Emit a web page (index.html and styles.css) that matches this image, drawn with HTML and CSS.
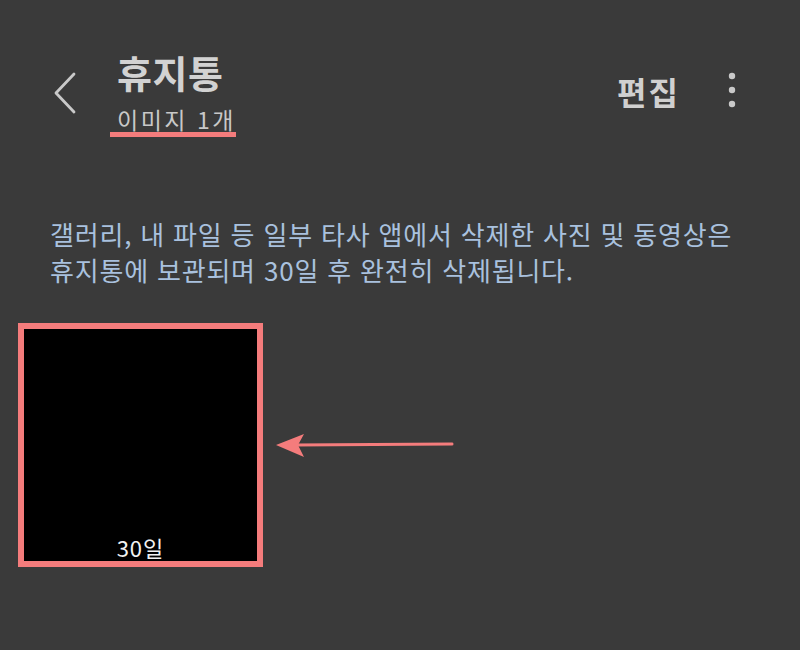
FILE: index.html
```html
<!DOCTYPE html>
<html lang="ko">
<head>
    <meta charset="utf-8">
    <title>휴지통</title>
    <link rel="stylesheet" href="styles.css">
</head>
<body>
    <div class="screen">
        <header class="topbar">
            <button class="back" aria-label="뒤로">
                <svg width="24" height="44" viewBox="0 0 24 44">
                    <path d="M21 3 L3 22 L21 41" fill="none" stroke="#c9c9c9" stroke-width="2.8" stroke-linecap="round" stroke-linejoin="round"/>
                </svg>
            </button>
            <div class="title-group">
                <h1 class="title">휴지통</h1>
                <span class="count">이미지 1개</span>
            </div>
            <div class="actions">
                <span class="edit">편집</span>
                <svg class="more" width="8" height="38" viewBox="0 0 8 38">
                    <circle cx="4" cy="4" r="3.2" fill="#c9c9c9"/>
                    <circle cx="4" cy="18" r="3.2" fill="#c9c9c9"/>
                    <circle cx="4" cy="32" r="3.2" fill="#c9c9c9"/>
                </svg>
            </div>
        </header>

        <p class="notice">갤러리, 내 파일 등 일부 타사 앱에서 삭제한 사진 및 동영상은<br>휴지통에 보관되며 30일 후 완전히 삭제됩니다.</p>

        <div class="grid">
            <div class="thumb">
                <span class="days">30일</span>
            </div>
            <svg class="arrow" width="180" height="30" viewBox="0 0 180 30">
                <line x1="20" y1="15" x2="177" y2="14" stroke="#f47c7c" stroke-width="3" stroke-linecap="round"/>
                <polygon points="1,15 29,4 23,15 29,27" fill="#f47c7c"/>
            </svg>
        </div>
    </div>
</body>
</html>
```

FILE: styles.css
```css
body {
    margin: 0;
    background: #3a3a3a;
    font-family: "Noto Sans CJK KR", "Noto Sans", sans-serif;
    color: #cfcfcf;
}
.screen {
    width: 800px;
    height: 650px;
    overflow: hidden;
}
.topbar {
    display: flex;
    align-items: flex-start;
    padding: 49px 64px 0 53px;
}
.back {
    background: none;
    border: none;
    padding: 0;
    margin-top: 22px;
    width: 24px;
    height: 44px;
    cursor: pointer;
}
.title-group {
    display: flex;
    flex-direction: column;
    align-items: flex-start;
    margin-left: 33px;
}
.title {
    margin: 0 0 0 7px;
    font-size: 38px;
    line-height: 45px;
    font-weight: 700;
    letter-spacing: 0.5px;
    color: #d2d2d2;
}
.count {
    display: inline-block;
    margin-top: 12px;
    padding: 0 0 0 7px;
    font-size: 23px;
    line-height: 26px;
    letter-spacing: 2.5px;
    color: #c8c8c8;
    border-bottom: 5px solid #f47c7c;
}
.actions {
    margin-left: auto;
    margin-top: 22px;
    display: flex;
    align-items: center;
    gap: 48px;
}
.edit {
    font-size: 32px;
    line-height: 40px;
    font-weight: 700;
    letter-spacing: 2px;
    color: #d0d0d0;
}
.notice {
    margin: 79px 50px 0 50px;
    font-size: 26px;
    line-height: 36px;
    letter-spacing: 0.8px;
    color: #a9c1de;
}
.grid {
    display: flex;
    align-items: center;
    gap: 12px;
    margin-top: 35px;
    padding-left: 18px;
}
.thumb {
    box-sizing: border-box;
    width: 245px;
    height: 244px;
    border: 6px solid #f47c7c;
    background: #000;
    display: flex;
    flex-direction: column;
    justify-content: flex-end;
    align-items: center;
    padding-bottom: 2px;
}
.days {
    font-size: 22px;
    line-height: 24px;
    letter-spacing: 1px;
    color: #f2f2f2;
}
```
